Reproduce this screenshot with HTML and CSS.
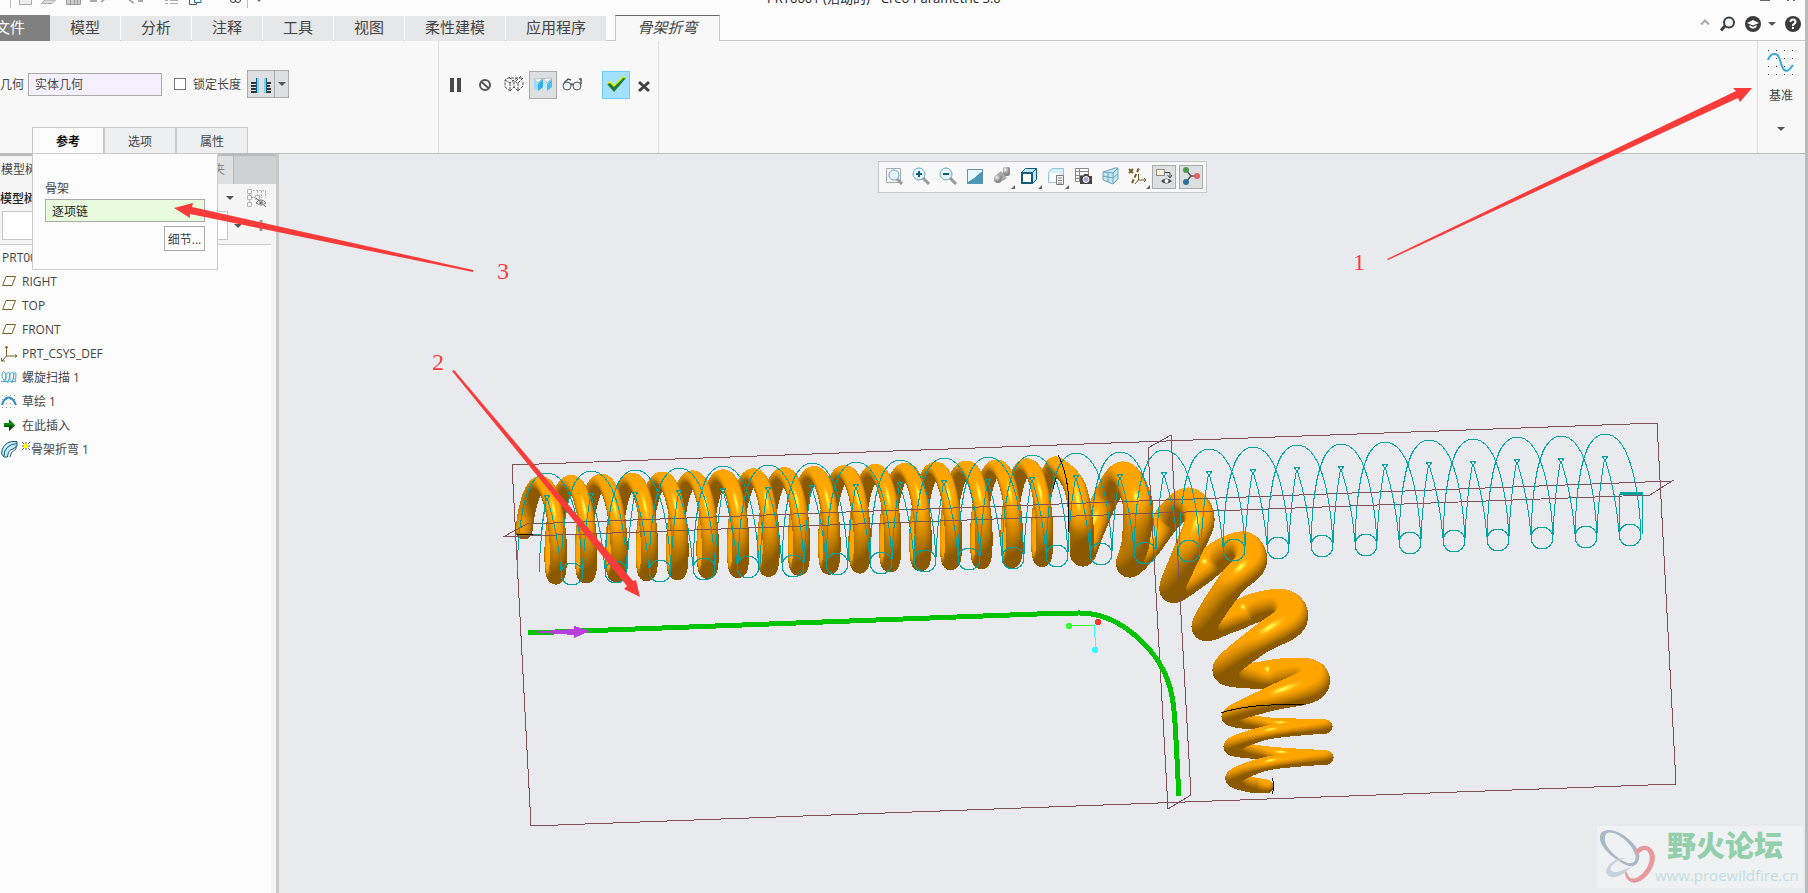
FILE: index.html
```
<!DOCTYPE html>
<html lang="zh-CN">
<head>
    <meta charset="UTF-8">
    <meta name="viewport" content="width=device-width, initial-scale=1.0">
    <title>PRT0001 (活动的) - Creo Parametric 3.0</title>
    <link rel="stylesheet" href="styles.css">
    <script src="scene.js" defer></script>
</head>
<body>
    <header class="titlebar">
        <svg class="quick-icons" width="280" height="10" fill="none" stroke="#aaa">
            <path d="M10.500 0V8M247.500 0V8" stroke="#bbb"/>
            <path d="M19.500 0V4.500H31.500V0" fill="#eee"/>
            <path d="M41.500 3.500L45 0H55.500L52 3.500Z" fill="#ddd"/>
            <path d="M66.500 0V4.500H80.500V0M70.500 0V4M74.500 0V4M77.500 0V4" stroke="#999" fill="#ccc"/>
            <path d="M90 1H97M101 2L104 0M129 0L134 3M138 1H143" stroke-width="2"/>
            <path d="M165 .500H168M170 .500H178M165 3.500H168M170 3.500H178"/>
            <path d="M194.500 0V2.500H201V0" stroke="#16708f"/>
            <path d="M189.500 0V4.500H196.500V2" stroke="#555"/>
            <circle cx="233" cy="0" r="2.500" stroke="#333"/><circle cx="238" cy="0" r="2.500" stroke="#333"/>
            <path d="M257 0H261L259 2Z" fill="#777" stroke="none"/>
        </svg>
        <span class="title">PRT0001 (活动的) - Creo Parametric 3.0</span>
        <svg width="50" height="2"><path d="M5 0H15M33 0V1M39 0V1" stroke="#666" stroke-width="2"/></svg>
    </header>

    <nav class="tabs">
        <button class="tab file">文件</button>
        <button class="tab">模型</button>
        <button class="tab">分析</button>
        <button class="tab">注释</button>
        <button class="tab">工具</button>
        <button class="tab">视图</button>
        <button class="tab wide">柔性建模</button>
        <button class="tab wide">应用程序</button>
        <button class="tab active">骨架折弯</button>
        <div class="help">
            <button aria-label="最小化功能区"><svg width="12" height="12"><path d="M1 6L6 1L11 6L9 7L6 4L3 7Z" fill="#aaa"/></svg></button>
            <button aria-label="搜索"><svg width="16" height="16" fill="none" stroke="#3c3c3c"><circle cx="9" cy="6.500" r="5" stroke-width="2" fill="#eef4fb"/><path d="M5 10L1 14.500" stroke-width="3"/></svg></button>
            <button class="learn" aria-label="学习"><svg width="16" height="16"><circle cx="8" cy="8" r="8" fill="#3c3c3c"/><path d="M2 7L8 4L14 7L8 9.500Z" fill="#fff"/><path d="M4.500 9V11Q8 14 11.500 11V9L8 11Z" fill="#fff"/></svg><svg width="8" height="5"><path d="M0 0H8L4 4Z" fill="#555"/></svg></button>
            <button aria-label="帮助"><svg width="16" height="16"><circle cx="8" cy="8" r="8" fill="#3c3c3c"/><path d="M5.500 6Q5.500 3.500 8 3.500T10.500 6Q10.500 7.200 9 8T8 10" fill="none" stroke="#fff" stroke-width="2"/><rect x="7" y="11" width="2" height="2" fill="#fff"/></svg></button>
        </div>
    </nav>

    <section class="ribbon">
        <div class="group options">
            <div class="row">
                <label for="geometry">几何</label>
                <input id="geometry" class="collector" type="text" value="实体几何">
                <input id="lock" type="checkbox">
                <label for="lock">锁定长度</label>
                <button class="split" aria-label="长度选项">
                    <svg width="27" height="26"><path d="M3 12H9M3 15H8M3 18H9M3 21H9M18 12H23M18 15H22M18 18H23M18 21H23" stroke="#333" stroke-width="2"/><path d="M10 7V22M17 7V22" stroke="#7fd0f0" stroke-width="2"/><path d="M8.500 7V22M18.500 7V22" stroke="#135c7d"/></svg>
                    <span class="arrow"></span>
                </button>
            </div>
            <div class="subtabs">
                <button class="subtab current">参考</button>
                <button class="subtab">选项</button>
                <button class="subtab">属性</button>
                <div class="panel">
                    <label for="spine">骨架</label>
                    <input id="spine" type="text" value="逐项链">
                    <button>细节...</button>
                </div>
            </div>
        </div>
        <div class="group controls">
            <button aria-label="暂停"><svg width="20" height="20"><path d="M4 3H8V17H4ZM11 3H15V17H11Z" fill="#4a4a4a"/></svg></button>
            <button aria-label="无预览"><svg width="20" height="20" fill="none" stroke="#555" stroke-width="2"><circle cx="10" cy="10" r="5"/><path d="M6 6.500L14 13.500"/></svg></button>
            <button aria-label="分离"><svg width="20" height="20" fill="none" stroke="#555"><path d="M1 5L6 8L13 3M6 8V16L1 12V5L4 3H19L14 8L10 6M6 16L10 12M14 8V16L10 12V6M14 16L19 11V6M5 2L9 6M17 1L12 6" stroke-dasharray="3 1"/></svg></button>
            <button class="pressed" aria-label="连接"><svg width="20" height="20"><path d="M1 4L5 8L10 3L14 8L19 3Z" fill="#fff" stroke="#b0bcc4"/><path d="M1 5L5 9V16L1 13Z" fill="#9bdcf8"/><path d="M5 9L10 4V12L5 16Z" fill="#35aee6"/><path d="M10 4L14 9V16L10 12Z" fill="#c5ecfc"/><path d="M14 9L19 4V12L14 16Z" fill="#4fbdee"/></svg></button>
            <button aria-label="校验"><svg width="20" height="20" fill="none" stroke="#555"><circle cx="5" cy="11" r="4" fill="#eaf2f6"/><circle cx="15" cy="11" r="4" fill="#eaf2f6"/><path d="M9 10Q10 8 11 10M2 8L6 4L9 5M19 9V4H17" stroke-width="1.500"/></svg></button>
            <button class="ok" aria-label="确定"><svg width="22" height="20"><path d="M2 9L5 7L9 11L18 2L21 3L9 17Z" fill="#1d7d35"/><path d="M2 9L5 7L9 11L18 2L20 2.500" fill="none" stroke="#dff000" stroke-width="1.500"/></svg></button>
            <button aria-label="取消"><svg width="16" height="20"><path d="M3 7L13 16M13 7L3 16" stroke="#444" stroke-width="3"/></svg></button>
        </div>
        <div class="group datum">
            <svg width="28" height="28"><g fill="#333"><path d="M1 1h1v1h-1zM9 1h1v1h-1zM17 1h1v1h-1zM25 1h1v1h-1zM1 9h1v1h-1zM9 9h1v1h-1zM17 9h1v1h-1zM25 9h1v1h-1zM1 17h1v1h-1zM9 17h1v1h-1zM17 17h1v1h-1zM25 17h1v1h-1zM1 25h1v1h-1zM9 25h1v1h-1zM17 25h1v1h-1zM25 25h1v1h-1z"/></g><path d="M1 11C4 3 11 3 13 11S18 28 26 16" fill="none" stroke="#35a9d8" stroke-width="2"/></svg>
            <button>基准</button>
            <span class="arrow"></span>
        </div>
    </section>

    <main class="workspace">
        <aside class="sidebar">
            <div class="side-tabs"><button class="side-tab on">模型树</button><button class="side-tab">收藏夹</button></div>
            <div class="side-head">
                <strong>模型树</strong>
                <span class="arrow"></span>
                <svg width="24" height="24" fill="none" stroke="#b5b5b5"><path d="M3.500 3.500h4v4h-4zM3.500 9.500h4v4h-4zM3.500 16.500h4v4h-4zM11.500 9.500h4v4h-4zM5.500 7.500v2M5.500 13.500v3M7.500 11.500h4"/><path d="M9 4.500H22M13.500 5V9M17.500 5V12M21.500 5V12" stroke-dasharray="2 1"/><path d="M12 17Q17 11 22 17Q17 21 12 17ZM12 12L22 21" stroke="#777"/><circle cx="17" cy="17" r="2" fill="#777"/></svg>
            </div>
            <div class="search"><input type="text" aria-label="搜索模型树"><span class="arrow"></span><svg width="10" height="11"><path d="M0 5H10M5 0V11" stroke="#999" stroke-width="3"/></svg></div>
            <ul class="tree">
                <li>PRT0001.PRT</li>
                <li><svg class="icon" viewBox="0 0 18 18"><path d="M2.500 13.500L6 4.500H15.500L12 13.500Z" class="brown"/></svg>RIGHT</li>
                <li><svg class="icon" viewBox="0 0 18 18"><path d="M2.500 13.500L6 4.500H15.500L12 13.500Z" class="brown"/></svg>TOP</li>
                <li><svg class="icon" viewBox="0 0 18 18"><path d="M2.500 13.500L6 4.500H15.500L12 13.500Z" class="brown"/></svg>FRONT</li>
                <li><svg class="icon" viewBox="0 0 18 18"><path d="M6.500 2V12H17M6.500 12L2 17M5 4L6.500 2L8 4M15 10.500L17 12L15 13.500M1.500 14V17H5" class="brown"/></svg>PRT_CSYS_DEF</li>
                <li><svg class="icon" viewBox="0 0 18 18" fill="none" stroke="#4ba8c4"><path d="M1 13.500H5Q1 10 2 6T5 5T6 10T4 13M6 13Q5 5 8 4.500T9 11T8 13M10 13Q9 5 12 4.500T13 11T12 13M14 12Q13 8 14 5H16L15.500 13.500H10M5 13.500H8"/></svg>螺旋扫描 1</li>
                <li><svg class="icon" viewBox="0 0 18 18"><path d="M2 3.500H17M2 7.500H17M2 11.500H17M2 15.500H17" stroke="#999" stroke-dasharray="1 3"/><path d="M2 13C5 3 12 3 16 13" fill="none" stroke="#2c8fc0" stroke-width="2"/></svg>草绘 1</li>
                <li><svg class="icon" viewBox="0 0 18 18"><path d="M4 7H9V3L15 9L9 15V11H4Z" fill="#0a8a0a"/><path d="M4 9.500H15L9 15V11H4Z" fill="#064d06"/></svg>在此插入</li>
                <li><svg class="icon" viewBox="0 0 18 18" stroke="#155a75"><path d="M1.500 14Q2 3 12 1.500L17 1.500V6L13 9Q8 10 7.500 17H4Z" fill="#c4eaf7"/><path d="M4 16Q4 5 17 3.500" fill="none"/><path d="M10 17Q10 12 16 9V6" fill="none"/></svg><svg class="spark" width="8" height="8"><path d="M0 0L8 8M8 0L0 8M4 0V8M0 4H8" stroke="#665"/><path d="M2 2H6V6H2Z" fill="#ff0"/></svg>骨架折弯 1</li>
            </ul>
        </aside>

        <div class="viewport">
            <canvas id="solid" class="scene" width="1526" height="739"></canvas>
            <svg class="scene" width="1526" height="739" viewBox="279 154 1526 739" fill="none">
                <defs>
                    <g id="turn">
                        <path d="M-30 99C-28 30 -18 0 0 0S32 30 36 98"/>
                        <path d="M-3 22H3L-1 28C-5 50 -7 75 -8 99M-3 22L1 28C8 50 12 75 14 98"/>
                        <circle cx="25" cy="101" r="11"/>
                    </g>
                </defs>
                <g class="plane">
                    <path d="M512 465L1657 423L1676 784L531 826Z"/>
                    <path d="M503 537L527 524L1672 481L1650 495Z"/>
                    <path d="M1148 448L1171 435L1191 795L1168 809Z"/>
                </g>
                <g id="wires" class="wire"></g>
                <path class="wire" d="M517 534H541L546 497M1619 534V495L1642 493V534"/>
                <path class="wire thick" d="M1620 494L1642 493"/>
                <path class="edge" d="M1058 455C1066 470 1069 490 1069 510L1068 533M1056 478L1053 489M517 535L533 534M1221 713Q1250 703 1304 705M1272 778Q1276 786 1272 794"/>
                <path class="spine" d="M528 633L1064 613H1078C1120 612 1158 650 1169 684C1176 707 1175 730 1179 796"/>
                <path d="M529 632L574 629V626L590 631L574 638V635Z" fill="#b93fdc"/>
                <path d="M1069 625H1094" stroke="#3f3"/>
                <path d="M1094 624L1096 649" stroke="#3ff"/>
                <circle cx="1069" cy="626" r="3" fill="#3f3"/>
                <circle cx="1095" cy="650" r="3" fill="#3ff"/>
                <circle cx="1098" cy="622" r="3" fill="#f33"/>
            </svg>

            <div class="view-tools">
                <button aria-label="重新调整"><svg viewBox="0 0 20 20"><path d="M2.500 2.500h14v14h-14z" fill="#f4f4f4" stroke="#aaa"/><circle cx="10" cy="9" r="5" class="lens"/><path d="M13 13L18 18" class="handle"/></svg></button>
                <button aria-label="放大"><svg viewBox="0 0 20 20"><circle cx="8" cy="8" r="6" class="lens"/><path d="M5 8H11M8 5V11" stroke="#135c7d" stroke-width="2"/><path d="M12 12L18 18" class="handle"/></svg></button>
                <button aria-label="缩小"><svg viewBox="0 0 20 20"><circle cx="8" cy="8" r="6" class="lens"/><path d="M5 8H11" stroke="#135c7d" stroke-width="2"/><path d="M12 12L18 18" class="handle"/></svg></button>
                <button aria-label="重画"><svg viewBox="0 0 20 20"><path d="M2 3H18V18H2Z" fill="#4698b8"/><path d="M2 3H18V6Q13 7 10 12L2 17Z" fill="#e8f7fd"/><path d="M2 17L10 12L17 6M2.500 3.500H17.500V17.500H2.500Z" fill="none" stroke="#5b93aa"/></svg></button>
                <button class="more" aria-label="渲染选项"><svg viewBox="0 0 20 20"><defs><radialGradient id="ball" cx=".35" cy=".3"><stop offset="0" stop-color="#f4f4f4"/><stop offset="1" stop-color="#888"/></radialGradient></defs><rect x="11" y="1" width="7" height="9" rx="2" fill="url(#ball)"/><path d="M4 9L9 5L15 12L11 15Z" fill="#aaa"/><circle cx="6" cy="13" r="4" fill="url(#ball)"/></svg></button>
                <button class="more" aria-label="显示样式"><svg viewBox="0 0 20 20"><path d="M2.500 6.500L6.500 2.500H17.500L13.500 6.500ZM13.500 6.500L17.500 2.500V13.500L13.500 17.500Z" fill="#bfe3f2" stroke="#135c7d"/><path d="M3 7H13V17H3Z" fill="#fff" stroke="#135c7d" stroke-width="2"/></svg></button>
                <button class="more" aria-label="已保存方向"><svg viewBox="0 0 20 20"><path d="M2.500 6.500L6 2.500H17.500V12L14 16.500H2.500Z" fill="#d4effa" stroke="#8ec5db"/><path d="M3 7H13V16H3Z" fill="#fff"/><path d="M10.500 9.500h7v9h-7z" fill="#fff" stroke="#777"/><path d="M12 12H16M12 14.500H16M12 17H16" stroke="#777"/></svg></button>
                <button aria-label="视图管理器"><svg viewBox="0 0 20 20"><path d="M2.500 2.500h13v13h-13zM2 5.500H15M2 9.500H10M2 12.500H8M6.500 3V15" fill="#fff" stroke="#888"/><path d="M7 10H10L11 8H15L16 10H19V18H7Z" fill="#444"/><circle cx="13" cy="13.500" r="3" fill="#aac" stroke="#fff"/></svg></button>
                <button aria-label="透视图"><svg viewBox="0 0 20 20" stroke="#6aa8c2"><path d="M3 6L15 2H18V13L13 18L3 14Z" fill="#c5e5f1"/><path d="M3 6L13 7L18 2M13 7V18M3 10L13 12L18 8M8 7V16" fill="none"/></svg></button>
                <button class="more" aria-label="基准显示过滤器"><svg viewBox="0 0 20 20" class="brown"><path d="M2 3L6 7M6 3L2 7" stroke-width="2"/><path d="M5 17L12 2" stroke-width="2" stroke-dasharray="4 2"/><path d="M11.500 8V14H19M11.500 14L8 18M17 12L19 14L17 16"/></svg></button>
                <button class="pressed" aria-label="注释显示"><svg viewBox="0 0 20 20"><path d="M2.500 3.500h8v6h-8z" fill="#fff3d4" stroke="#888"/><path d="M11 6.500H16V11M13.500 9L16 12L18 9" fill="none" stroke="#444"/><path d="M7 15Q12 10 18 15Q12 20 7 15Z" fill="#444"/><circle cx="12.500" cy="15" r="2" fill="#fff"/></svg></button>
                <button class="pressed" aria-label="旋转中心"><svg viewBox="0 0 20 20"><path d="M5 4L10 10H16M10 10L5 16" stroke="#555" fill="none" stroke-width="1.500"/><circle cx="5" cy="4" r="3" fill="#4b9a52"/><circle cx="16" cy="10" r="3" fill="#e06464"/><circle cx="5" cy="16" r="3" fill="#2b7296"/></svg></button>
            </div>

            <div class="watermark">
                <svg width="60" height="60" fill-rule="evenodd">
                    <path d="M4 7C14 -3 38 14 42 27C44 38 36 43 29 39C17 33 -2 19 4 7ZM9 8C3 18 20 34 31 37C37 38 40 34 38 28C34 16 16 2 9 8Z" fill="#a9b9c8"/>
                    <path d="M39 24C46 16 57 20 58 31C58 44 44 60 34 56C29 54 27 48 28 42C31 51 33 54 39 52C48 48 55 36 52 28C50 23 46 22 40 30Z" fill="#e69a9e"/>
                    <path d="M29 33C20 28 6 42 10 48C15 56 28 48 34 41C27 44 16 49 14 44C12 40 22 32 29 33Z" fill="#c8d2dc"/>
                </svg>
                <div class="mark-text"><b>野火论坛</b><span>www.proewildfire.cn</span></div>
            </div>
        </div>
    </main>

    <svg class="notes" width="1808" height="893">
        <path d="M1387 259L1388 260L1738 98L1740 102L1752 88H1733L1736 91Z"/>
        <path d="M452 371L627 586L624 589L640 597L636 580L633 581L454 370Z"/>
        <path d="M473 270V272L190 214V218L174 208L193 203L192 207Z"/>
        <text x="1353" y="270">1</text>
        <text x="432" y="370">2</text>
        <text x="497" y="279">3</text>
    </svg>
</body>
</html>
```
FILE: styles.css
```
* {
    box-sizing: border-box;
}
body {
    margin: 0;
    height: 100vh;
    overflow: hidden;
    display: flex;
    flex-direction: column;
    position: relative;
    background-color: #fcfcfc;
    border-right: 3px solid #bababa;
    font-family: "Open Sans", "Noto Sans CJK SC", sans-serif;
    font-size: 12px;
    color: #444;
}
button, input {
    font: inherit;
    color: inherit;
    margin: 0;
    padding: 0;
}
button {
    background: none;
    border: 0;
}
svg {
    display: block;
    flex: none;
}
.arrow {
    border: 4px solid transparent;
    border-top-color: #555;
    border-bottom: 0;
}
.brown {
    fill: none;
    stroke: #7a5c28;
}

/* title bar */
.titlebar {
    display: flex;
    height: 15px;
    overflow: hidden;
}
.title {
    flex: 1;
    margin: -10px 0 0 487px;
    line-height: 16px;
    font-size: 13px;
    color: #222;
}

/* ribbon tabs */
.tabs {
    display: flex;
    align-items: flex-end;
    height: 26px;
    border-bottom: 1px solid #c9c9c9;
}
.tab {
    width: 70px;
    height: 25px;
    margin: 0 1px -1px 0;
    padding-bottom: 4px;
    background-color: #e6e7e9;
    font-size: 15px;
}
.tab.file {
    width: 50px;
    height: 26px;
    margin-right: 0;
    text-align: left;
    text-indent: -5px;
    background-color: #808080;
    color: #fff;
}
.tab.wide {
    width: 100px;
}
.tab.active {
    width: 105px;
    height: 26px;
    margin-left: 8px;
    border: 1px solid #c9c9c9;
    border-top-color: #666;
    border-bottom: 0;
    background-color: #f8f8f8;
    font-style: italic;
}
.help {
    display: flex;
    align-items: center;
    gap: 9px;
    height: 16px;
    margin: 0 0 8px auto;
    padding-right: 4px;
}
.help .learn {
    display: flex;
    align-items: center;
    gap: 7px;
}

/* ribbon */
.ribbon {
    display: flex;
    height: 113px;
    background-color: #f8f8f8;
    border-bottom: 1px solid #bbb;
}
.group {
    border-right: 1px solid #dedede;
}
.options {
    width: 439px;
    display: flex;
    flex-direction: column;
    justify-content: space-between;
}
.row {
    display: flex;
    align-items: center;
    padding-top: 29px;
}
.collector {
    width: 134px;
    height: 23px;
    margin: 0 12px 0 4px;
    padding: 0 0 1px 6px;
    border: 1px solid #aaa;
    background-color: #f5f0ff;
}
.row input[type="checkbox"] {
    appearance: none;
    width: 12px;
    height: 12px;
    margin-right: 7px;
    border: 1px solid #777;
    background-color: #fff;
}
.split {
    display: flex;
    align-items: center;
    width: 42px;
    height: 28px;
    margin-left: 6px;
    border: 1px solid #aaa;
    background-color: #dedfe1;
}
.split svg {
    border-right: 1px solid #aaa;
}
.split .arrow {
    margin-left: 3px;
}
.subtabs {
    display: flex;
    position: relative;
    margin-left: 32px;
}
.subtab {
    width: 72px;
    height: 26px;
    border: 1px solid #c6c8ca;
    border-bottom: 0;
    background-color: #eeeff1;
}
.subtab.current {
    background-color: #fcfcfc;
    color: #111;
    font-weight: 600;
}
.panel {
    position: absolute;
    z-index: 2;
    top: 26px;
    left: 0;
    width: 186px;
    display: flex;
    flex-direction: column;
    padding: 26px 12px 18px;
    border: 1px solid #ccc;
    background-color: #fcfcfc;
}
.panel label {
    line-height: 18px;
}
.panel input {
    height: 23px;
    margin: 1px 0 4px;
    padding-left: 6px;
    border: 1px solid #aaa;
    background-color: #e8fbdc;
    color: #222;
}
.panel button {
    align-self: flex-end;
    width: 41px;
    height: 25px;
    border: 1px solid #aaa;
}
.controls {
    display: flex;
    align-items: flex-start;
    width: 220px;
    padding: 30px 0 0 3px;
}
.controls button {
    display: flex;
    align-items: center;
    justify-content: center;
    width: 28px;
    height: 28px;
    border: 1px solid transparent;
    margin-right: 1px;
}
.controls .pressed {
    background-color: #dedfe1;
    border-color: #aaa;
}
.controls .ok {
    margin-left: 15px;
    background-color: #a4e0ff;
    border-color: #6fccfa;
}
.controls button:last-child {
    width: 26px;
}
.datum {
    display: flex;
    flex-direction: column;
    align-items: center;
    width: 48px;
    margin-left: auto;
    padding: 8px 1px 0 0;
    border-left: 1px solid #dedede;
    border-right: 0;
}
.datum button {
    margin: 9px 0 21px;
    line-height: 20px;
}

/* model tree */
.workspace {
    flex: 1;
    min-height: 0;
    display: flex;
}
.sidebar {
    width: 279px;
    display: flex;
    flex-direction: column;
    background-color: #f5f5f5;
    border-right: 3px solid #c9c9c9;
    white-space: nowrap;
}
.side-tabs {
    display: flex;
    height: 30px;
    border-top: 2px solid #bbb;
    background-color: #d0d1d3;
}
.side-tab {
    width: 117px;
    padding: 0 8px 2px;
    text-align: right;
    background-color: #dfe0e2;
    border-right: 1px solid #bbb;
    color: #888;
}
.side-tab.on {
    padding: 0 1px 2px;
    text-align: left;
    background-color: #f5f5f5;
    color: #444;
}
.side-head {
    display: flex;
    align-items: center;
    height: 27px;
}
.side-head strong {
    font-weight: 500;
    color: #222;
}
.side-head .arrow {
    margin: 0 10px 0 auto;
}
.side-head svg {
    margin-right: 8px;
}
.search {
    display: flex;
    align-items: center;
    gap: 6px;
    padding: 0 0 4px 2px;
}
.search input {
    width: 226px;
    height: 29px;
    border: 1px solid #c4c6c8;
    background-color: #fff;
}
.search svg {
    margin-left: 8px;
}
.tree {
    flex: 1;
    margin: 0 5px 0 0;
    padding: 0;
    list-style: none;
    border-top: 1px solid #ccc;
    background-color: #fcfcfc;
}
.tree li {
    display: flex;
    align-items: center;
    height: 24px;
    padding-left: 2px;
}
.tree .icon {
    width: 18px;
    height: 18px;
    margin: 0 4px 0 -2px;
}
.tree .spark {
    align-self: flex-start;
    margin: 5px 1px 0 0;
}

/* graphics window */
.viewport {
    flex: 1;
    min-width: 0;
    position: relative;
    overflow: hidden;
    background-color: #e8eaee;
}
.scene {
    position: absolute;
    top: 0;
    left: 0;
}
.scene path, .scene circle {
    shape-rendering: crispEdges;
}
.plane {
    stroke: #7d5157;
}
.wire {
    stroke: #00a3a0;
}
.thick {
    stroke-width: 3px;
}
.edge {
    stroke: #000;
}
.spine {
    stroke: #00c400;
    stroke-width: 5px;
}
.view-tools {
    position: relative;
    display: flex;
    align-items: center;
    gap: 3px;
    width: max-content;
    height: 32px;
    margin: 7px auto 0;
    padding: 0 3px;
    border: 1px solid #c3c5c8;
    background-color: #f8f8f8;
}
.view-tools button {
    position: relative;
    width: 24px;
    height: 24px;
    padding: 0 1px 2px;
    border: 1px solid transparent;
}
.view-tools svg {
    width: 20px;
    height: 20px;
}
.view-tools .pressed {
    background-color: #dedfe1;
    border-color: #aaa;
}
.more::after {
    content: "";
    position: absolute;
    right: -2px;
    bottom: -1px;
    border: 2px solid #666;
    border-top-color: transparent;
    border-left-color: transparent;
}
.lens {
    fill: #e6f5fb;
    stroke: #68a9c4;
    stroke-width: 1px;
}
.handle {
    stroke: #999;
    stroke-width: 3px;
}
.watermark {
    position: absolute;
    right: 2px;
    bottom: 5px;
    display: flex;
    width: 206px;
    height: 62px;
    background-color: #eff1f3;
}
.mark-text {
    display: flex;
    flex-direction: column;
    margin-left: -2px;
}
.mark-text b {
    margin-left: 12px;
    font-size: 29px;
    line-height: 40px;
    font-weight: 900;
    color: #93cfaa;
}
.mark-text span {
    font-size: 15px;
    line-height: 18px;
    color: #bfdfdf;
}

/* markup drawn over the whole window */
.notes {
    position: absolute;
    z-index: 5;
    top: 0;
    left: 0;
    fill: #fb3b39;
    pointer-events: none;
}
.notes text {
    font-family: "Liberation Serif", serif;
    font-size: 24px;
}
```
FILE: scene.js
```
const ORIGIN_X = 279;
const ORIGIN_Y = 154;

// wireframe of the straight helix
const wires = document.getElementById('wires');
for (let i = 0; i < 25; i++) {
    const turn = document.createElementNS('http://www.w3.org/2000/svg', 'use');
    turn.setAttribute('href', '#turn');
    turn.setAttribute('x', Math.round(547 + i * 44.1));
    turn.setAttribute('y', Math.round(473 - i * 1.63));
    wires.appendChild(turn);
}

// centre line of the bent spring: x, y, depth, tube radius
const line = [];
for (let s = -4; s <= 17 * 16; s++) {
    const a = s * Math.PI / 8;
    const n = s / 16;
    line.push([540 + n * 30.4 + 9 * Math.sin(a), 530 - n * 1.1 - 46 * Math.cos(a), 46 * Math.sin(a), 8.6]);
}
line.push(
    [1074, 486, 35, 11], [1081, 525, 46, 12], [1082, 554, 0, 12],
    [1092, 530, -36, 12], [1107, 494, -40, 13], [1123, 475, 0, 14],
    [1137, 502, 42, 15], [1135, 542, 30, 14], [1129, 564, 0, 13],
    [1147, 548, -34, 12], [1168, 517, -40, 14], [1188, 502, 0, 15],
    [1199, 520, 40, 15], [1186, 553, 42, 14], [1172, 589, 0, 13],
    [1197, 573, -36, 14], [1219, 555, -38, 15], [1243, 546, 0, 15],
    [1250, 562, 38, 16], [1230, 584, 46, 14], [1204, 626, 0, 13],
    [1230, 618, -36, 14], [1256, 607, -40, 15], [1284, 604, 0, 15],
    [1289, 620, 34, 17], [1257, 641, 46, 14], [1225, 669, 0, 13],
    [1250, 675, -36, 13], [1280, 673, -40, 15], [1308, 673, 0, 15],
    [1309, 685, 34, 17], [1268, 699, 46, 12], [1229, 716, 0, 8],
    [1260, 723, -42, 7], [1295, 725, -42, 7], [1325, 726, 0, 7],
    [1300, 728, 34, 7], [1263, 733, 46, 7], [1231, 746, 0, 8],
    [1260, 752, -42, 7], [1295, 755, -42, 7], [1326, 757, 0, 7],
    [1300, 759, 34, 7], [1263, 764, 46, 7], [1233, 777, 0, 8],
    [1250, 784, -30, 8], [1266, 786, -40, 7]
);

const canvas = document.getElementById('solid');
const ctx = canvas.getContext('2d');
const W = canvas.width;
const H = canvas.height;
const image = ctx.createImageData(W, H);
const depth = new Float32Array(W * H).fill(-1e9);

function unit(v) {
    const d = Math.hypot(v[0], v[1], v[2]);
    return v.map(c => c / d);
}
const light = unit([-0.15, -0.7, 0.7]);
const half = unit([light[0], light[1], light[2] + 1]);

function ball(cx, cy, cz, r) {
    cx -= ORIGIN_X;
    cy -= ORIGIN_Y;
    for (let y = Math.ceil(cy - r); y <= cy + r; y++) {
        for (let x = Math.ceil(cx - r); x <= cx + r; x++) {
            const nx = (x - cx) / r;
            const ny = (y - cy) / r;
            const q = 1 - nx * nx - ny * ny;
            if (q < 0) continue;
            const nz = Math.sqrt(q);
            const z = cz + nz * r;
            const p = y * W + x;
            if (z <= depth[p]) continue;
            depth[p] = z;
            const diffuse = Math.max(0, nx * light[0] + ny * light[1] + nz * light[2]);
            const shine = Math.pow(Math.max(0, nx * half[0] + ny * half[1] + nz * half[2]), 60);
            const k = Math.min(1, 0.54 + 0.62 * diffuse);
            image.data[p * 4] = 255 * k;
            image.data[p * 4 + 1] = 165 * k + 90 * shine;
            image.data[p * 4 + 2] = 80 * shine;
            image.data[p * 4 + 3] = 255;
        }
    }
}

function spline(a, b, c, d, t) {
    return 0.5 * (2 * b + (c - a) * t + (2 * a - 5 * b + 4 * c - d) * t * t + (3 * b - a - 3 * c + d) * t * t * t);
}

for (let i = 0; i < line.length - 1; i++) {
    const a = line[Math.max(0, i - 1)];
    const b = line[i];
    const c = line[i + 1];
    const d = line[Math.min(line.length - 1, i + 2)];
    const steps = Math.ceil(Math.hypot(c[0] - b[0], c[1] - b[1], c[2] - b[2]) * 3);
    for (let s = 0; s < steps; s++) {
        const v = b.map((_, j) => spline(a[j], b[j], c[j], d[j], s / steps));
        ball(v[0], v[1], v[2], v[3]);
    }
}
ctx.putImageData(image, 0, 0);
```
